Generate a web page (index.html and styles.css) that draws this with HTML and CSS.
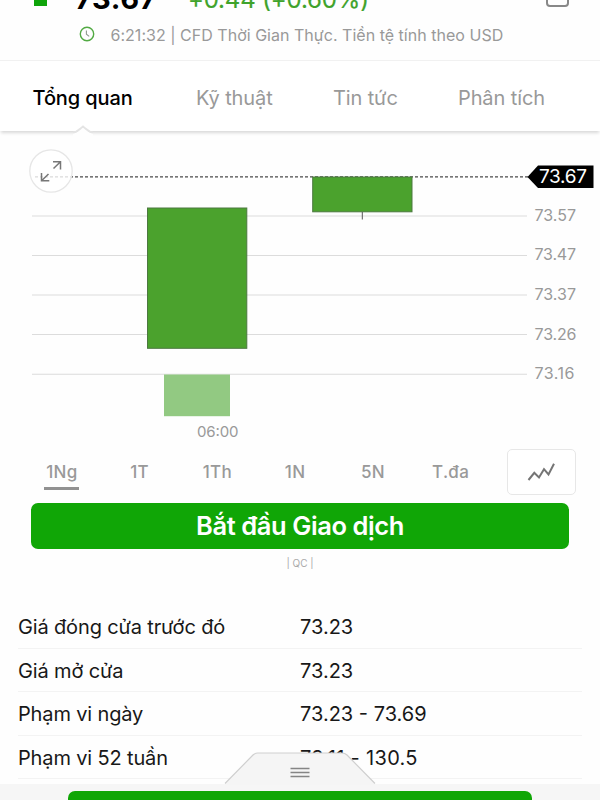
FILE: index.html
```html
<!DOCTYPE html>
<html lang="vi">
<head>
<meta charset="utf-8">
<title>Tổng quan</title>
<link rel="stylesheet" href="styles.css">
</head>
<body>
<div class="app">
  <header class="quote">
    <div class="quote-line">
      <span class="direction"></span>
      <span class="price">73.67</span>
      <span class="change">+0.44 (+0.60%)</span>
      <span class="bookmark"></span>
    </div>
    <div class="status">
      <svg class="clock" viewBox="0 0 16 16"><circle cx="8" cy="8" r="6.7" fill="none" stroke="#52aa43" stroke-width="1.4"/><path d="M7.4 4.4V8.3L10.2 10.4" fill="none" stroke="#8e9a8e" stroke-width="1.1"/></svg>
      <span class="status-text">6:21:32 | CFD Thời Gian Thực. Tiền tệ tính theo USD</span>
    </div>
  </header>
  <nav class="tabs">
    <span class="tab tab-active">Tổng quan</span>
    <span class="tab tab-technical">Kỹ thuật</span>
    <span class="tab tab-news">Tin tức</span>
    <span class="tab tab-analysis">Phân tích</span>
    <svg class="notch" viewBox="0 0 20 12"><path d="M0 8C4 8 5 6 10 2C15 6 16 8 20 8V12H0Z" fill="#fefefe"/><path d="M0 7.500C4 7.500 5 5.500 10 1.500C15 5.500 16 7.500 20 7.500" fill="none" stroke="#e4e4e4" stroke-width="2"/></svg>
  </nav>
  <svg class="chart" viewBox="0 134 600 312">
    <g class="grid">
      <path d="M32 216H527M32 255.5H527M32 295H527M32 334.5H527M32 374.3H527"/>
    </g>
    <path class="current" d="M35 176.8H530"/>
    <rect class="candle" x="147.5" y="208" width="99.3" height="140.3"/>
    <rect class="candle" x="312.7" y="177" width="99.3" height="34.8"/>
    <path class="wick" d="M362.3 212V219.5"/>
    <rect class="volume" x="164" y="374.5" width="66" height="41.7"/>
    <g class="axis">
      <text x="534.5" y="220.5" textLength="41.5">73.57</text>
      <text x="534.5" y="260.2" textLength="41.5">73.47</text>
      <text x="534.5" y="299.8" textLength="41.5">73.37</text>
      <text x="534.5" y="339.5" textLength="42">73.26</text>
      <text x="534.5" y="378.5" textLength="40">73.16</text>
      <text class="time" x="197" y="436.5" textLength="41.5">06:00</text>
    </g>
    <path d="M527.5 177L538 165.5H593.5V188H538Z"/>
    <text class="tag" x="539" y="183.4" textLength="48">73.67</text>
    <circle class="expand" cx="51" cy="171" r="21.2"/>
    <path class="arrows" d="M53.5 168.5L60.5 161.7M53 161.7H60.5V169.5M48.5 174L41.5 180.8M41.5 173V180.8H49.3"/>
  </svg>
  <div class="ranges">
    <div class="range range-active"><span>1Ng</span></div>
    <div class="range">1T</div>
    <div class="range">1Th</div>
    <div class="range">1N</div>
    <div class="range">5N</div>
    <div class="range">T.đa</div>
    <div class="chart-type"><svg viewBox="0 0 28 20"><path d="M1.5 18L7.3 10.8L12 15.5L17 7.2L21.5 12.5L27 1.8" fill="none" stroke="#757575" stroke-width="2"/></svg></div>
  </div>
  <div class="trade">Bắt đầu Giao dịch</div>
  <div class="ad">| QC |</div>
  <dl class="stats">
    <div class="row"><dt>Giá đóng cửa trước đó</dt><dd>73.23</dd></div>
    <div class="row"><dt>Giá mở cửa</dt><dd>73.23</dd></div>
    <div class="row"><dt>Phạm vi ngày</dt><dd>73.23 - 73.69</dd></div>
    <div class="row"><dt>Phạm vi 52 tuần</dt><dd class="year">73.11 - 130.5</dd></div>
  </dl>
  <div class="sheet">
    <svg class="handle" viewBox="0 0 152 33"><path d="M0 33L29 3Q31 1 34 1H118Q121 1 123 3L152 33Z" fill="#f5f5f5"/><path d="M1 31.5L29 3Q31 1 34 1H118Q121 1 123 3L151 31.5" fill="none" stroke="#cfcfcf" stroke-width="1.2"/><path d="M66.5 16.500H85.500M66.5 20.500H85.500M66.5 24.500H85.500" stroke="#858585" stroke-width="1.4"/></svg>
    <div class="sheet-button"></div>
  </div>
</div>
</body>
</html>
```
FILE: styles.css
```css
* { box-sizing: border-box; }
body { margin: 0; background: #fff; font-family: Inter, sans-serif; }
.app { position: relative; width: 600px; height: 800px; overflow: hidden; background: #fefefe; display: flex; flex-direction: column; white-space: nowrap; }

.quote { height: 61px; border-bottom: 1px solid #f1f1f1; flex: none; overflow: hidden; }
.quote-line { display: flex; align-items: flex-end; height: 36px; margin-top: -19px; padding-left: 34px; }
.direction { width: 13px; height: 14px; background: #0fa40a; margin-bottom: 11px; }
.price { margin-left: 28px; width: 113px; font-size: 29px; line-height: 36px; font-weight: 700; color: #000; letter-spacing: 0.6px; }
.change { font-size: 24px; line-height: 35px; color: #3fa32b; -webkit-text-stroke: 0.2px #3fa32b; letter-spacing: -0.15px; width: 358px; }
.bookmark { width: 23px; height: 22px; border: 2px solid #888; border-radius: 4px; margin-bottom: 10px; }
.status { display: flex; align-items: center; height: 24px; margin-top: 5px; padding-left: 79px; }
.clock { width: 16px; height: 16px; }
.status-text { margin-left: 15.5px; padding-top: 1px; font-size: 16px; color: #999; letter-spacing: 0.02px; }

.tabs { position: relative; display: flex; height: 70px; flex: none; padding: 0 55px 0 32.5px; align-items: center; justify-content: space-between; font-size: 20px; letter-spacing: -0.1px; color: #999; box-shadow: 0 3px 3px -1px #d9d9d9; background: #fff; }
.tab { padding-top: 3px; }
.tab-active { color: #000; font-weight: 500; }
.tab-technical { margin-left: 3px; }
.notch { position: absolute; left: 73px; bottom: -6px; width: 20px; height: 12px; }

.chart { display: block; width: 600px; height: 312px; margin-top: 3px; flex: none; }
.grid { stroke: #dcdcdc; stroke-width: 1.1; }
.current { stroke: #4a4a4a; stroke-width: 1.2; stroke-dasharray: 3 2; }
.candle { fill: #4ba22d; stroke: #4c7840; stroke-width: 1; }
.wick { stroke: #555; stroke-width: 1; }
.volume { fill: #92c982; }
.axis { fill: #999; font-size: 16px; }
.time { font-size: 15px; }
.tag { fill: #fff; font-size: 19px; }
.expand { fill: #fff; fill-opacity: 0.8; stroke: #e6e6e6; stroke-width: 1.3; }
.arrows { fill: none; stroke: #777; stroke-width: 1.5; }

.ranges { display: flex; height: 57px; flex: none; padding: 3px 24px 0 23px; font-size: 17px; font-weight: 500; color: #999; }
.range { width: 77.8px; height: 43px; line-height: 46px; text-align: center; letter-spacing: 0.3px; }
.range-active span { display: block; width: 35px; height: 41px; margin: 0 auto; border-bottom: 3px solid #919191; }
.chart-type { width: 69px; height: 46px; margin-left: 17.5px; border: 1px solid #e7e7e7; border-radius: 5px; display: flex; align-items: center; justify-content: center; background: #fff; }
.chart-type svg { width: 28px; height: 20px; }

.trade { height: 46px; flex: none; margin: 0 31px 0 31px; border-radius: 7px; background: #10a606; color: #fff; font-size: 25.5px; line-height: 46px; font-weight: 600; letter-spacing: -0.42px; text-align: center; }
.ad { height: 56px; flex: none; text-align: center; font-size: 10px; line-height: 29px; color: #aaa; }

.stats { margin: 0; padding: 0 18px; font-size: 20px; color: #181818; }
.row { display: flex; align-items: center; height: 43.6px; padding-top: 2px; border-bottom: 1px solid #f3f3f3; }
.row dt { width: 282px; letter-spacing: -0.15px; }
.row dd { margin: 0; }
.row .year { letter-spacing: 0.3px; }

.sheet { position: absolute; left: 0; right: 0; bottom: 0; height: 16px; background: #f6f6f6; }
.handle { position: absolute; left: 224px; top: -32px; width: 152px; height: 33px; }
.sheet-button { height: 16px; margin: 7px 68px 0; border-radius: 7px 7px 0 0; background: #10a606; }
```
